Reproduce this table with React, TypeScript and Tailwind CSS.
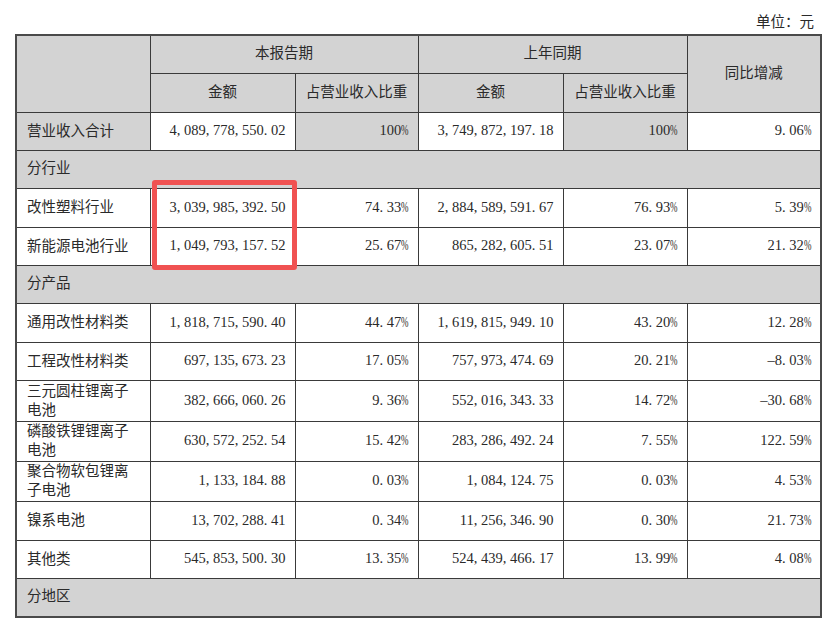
import React from "react";

const FONT = '"Liberation Serif", "Noto Sans CJK SC", serif';

function Num({ v }: { v: string }) {
  return (
    <span className="whitespace-nowrap">
      {v.split("").map((c, i) =>
        /[0-9]/.test(c) ? (
          <span key={i}>{c}</span>
        ) : c === "%" ? (
          <span key={i} className="inline-block w-[0.5em] overflow-visible">
            <span className="inline-block origin-left scale-x-[0.62]">%</span>
          </span>
        ) : c === "-" ? (
          <span key={i} className="inline-block w-[0.5em] text-left">
            –
          </span>
        ) : (
          <span key={i} className="inline-block w-[0.5em] text-left">
            {c}
          </span>
        )
      )}
    </span>
  );
}

type Row =
  | { kind: "section"; label: string; h: number }
  | { kind: "data"; label: string; h: number; v: [string, string, string, string, string]; total?: boolean };

const rows: Row[] = [
  { kind: "data", label: "营业收入合计", h: 38, total: true, v: ["4,089,778,550.02", "100%", "3,749,872,197.18", "100%", "9.06%"] },
  { kind: "section", label: "分行业", h: 38 },
  { kind: "data", label: "改性塑料行业", h: 39, v: ["3,039,985,392.50", "74.33%", "2,884,589,591.67", "76.93%", "5.39%"] },
  { kind: "data", label: "新能源电池行业", h: 38, v: ["1,049,793,157.52", "25.67%", "865,282,605.51", "23.07%", "21.32%"] },
  { kind: "section", label: "分产品", h: 38 },
  { kind: "data", label: "通用改性材料类", h: 39, v: ["1,818,715,590.40", "44.47%", "1,619,815,949.10", "43.20%", "12.28%"] },
  { kind: "data", label: "工程改性材料类", h: 38, v: ["697,135,673.23", "17.05%", "757,973,474.69", "20.21%", "-8.03%"] },
  { kind: "data", label: "三元圆柱锂离子电池", h: 41, v: ["382,666,060.26", "9.36%", "552,016,343.33", "14.72%", "-30.68%"] },
  { kind: "data", label: "磷酸铁锂锂离子电池", h: 40, v: ["630,572,252.54", "15.42%", "283,286,492.24", "7.55%", "122.59%"] },
  { kind: "data", label: "聚合物软包锂离子电池", h: 40, v: ["1,133,184.88", "0.03%", "1,084,124.75", "0.03%", "4.53%"] },
  { kind: "data", label: "镍系电池", h: 39, v: ["13,702,288.41", "0.34%", "11,256,346.90", "0.30%", "21.73%"] },
  { kind: "data", label: "其他类", h: 38, v: ["545,853,500.30", "13.35%", "524,439,466.17", "13.99%", "4.08%"] },
  { kind: "section", label: "分地区", h: 39 },
];

const cell = "border border-[#3a3a3a] p-0 align-middle";
const gray = "bg-[#d3d3d3]";

export default function App() {
  return (
    <div
      className="relative w-[831px] h-[622px] bg-white text-[#2a2a2a] text-[14.5px]"
      style={{ fontFamily: FONT }}
    >
      <div className="h-[34px] flex items-start justify-end pr-[17px] pt-[12px] leading-[20px]">
        单位：元
      </div>
      <div className="pl-[15px]">
        <table className="border-collapse table-fixed w-[805px] border-2 border-[#4a4a4a]">
          <colgroup>
            <col className="w-[134px]" />
            <col className="w-[145px]" />
            <col className="w-[123px]" />
            <col className="w-[145px]" />
            <col className="w-[124px]" />
            <col className="w-[134px]" />
          </colgroup>
          <tbody>
            <tr className="h-[38px]">
              <td rowSpan={2} className={`${cell} ${gray}`}></td>
              <td colSpan={2} className={`${cell} ${gray} text-center`}>
                本报告期
              </td>
              <td colSpan={2} className={`${cell} ${gray} text-center`}>
                上年同期
              </td>
              <td rowSpan={2} className={`${cell} ${gray} text-center`}>
                同比增减
              </td>
            </tr>
            <tr className="h-[39px]">
              <td className={`${cell} ${gray} text-center`}>金额</td>
              <td className={`${cell} ${gray} text-center`}>占营业收入比重</td>
              <td className={`${cell} ${gray} text-center`}>金额</td>
              <td className={`${cell} ${gray} text-center`}>占营业收入比重</td>
            </tr>
            {rows.map((r, i) =>
              r.kind === "section" ? (
                <tr key={i} style={{ height: r.h }}>
                  <td colSpan={6} className={`${cell} ${gray} pl-[10px]`}>
                    {r.label}
                  </td>
                </tr>
              ) : (
                <tr key={i} style={{ height: r.h }}>
                  <td className={`${cell} ${r.total ? gray : "bg-white"} pl-[10px]`}>
                    <div className="w-[108px] leading-[19px]">{r.label}</div>
                  </td>
                  {r.v.map((v, j) => (
                    <td
                      key={j}
                      className={`${cell} ${r.total && (j === 1 || j === 3) ? gray : "bg-white"} text-right pr-[9px]`}
                    >
                      <Num v={v} />
                    </td>
                  ))}
                </tr>
              )
            )}
          </tbody>
        </table>
      </div>
      <div className="absolute left-[152px] top-[180px] w-[145px] h-[90px] border-[5px] border-[#f05252] rounded-[3px] pointer-events-none"></div>
    </div>
  );
}
